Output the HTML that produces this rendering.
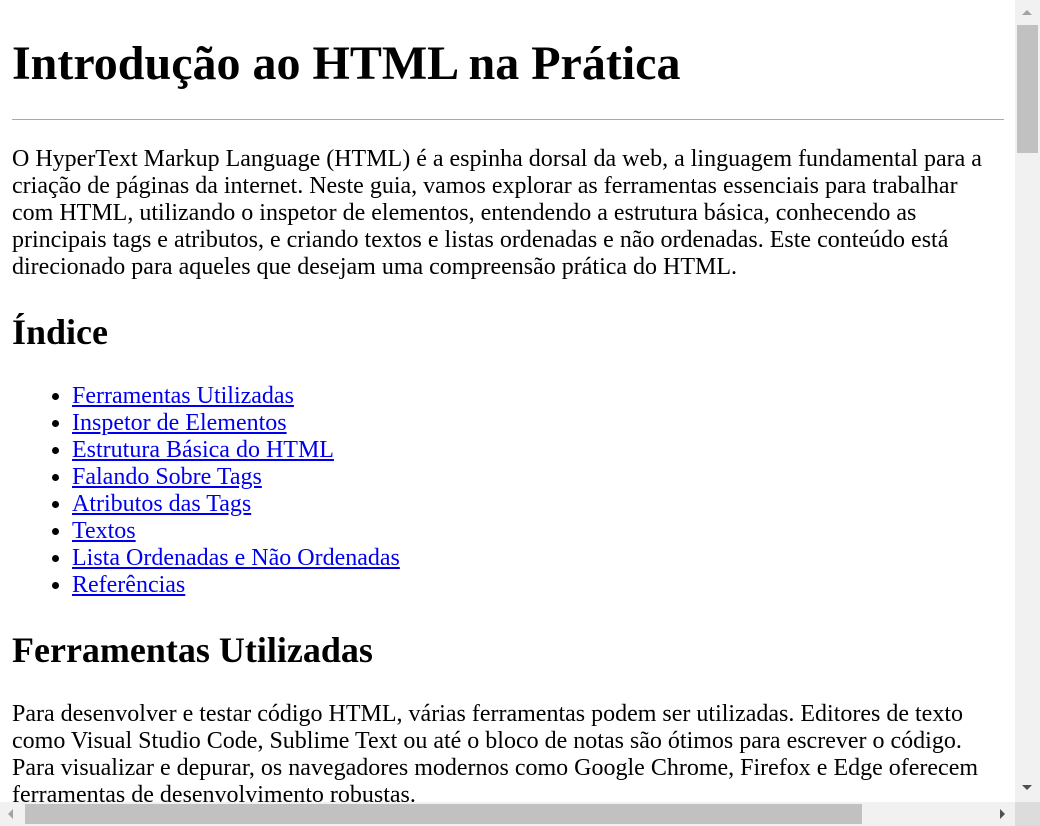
<!DOCTYPE html>
<html><head><meta charset="utf-8"><style>
html,body{margin:0;padding:0;overflow:hidden;background:#fff;width:1040px;height:826px}
#vp{position:absolute;left:0;top:0;width:1015px;height:802px;overflow:hidden}
#c{zoom:1.5;margin:8px;width:661px;font-family:"Liberation Serif",serif;font-size:16px;color:#000}
h1{font-size:2em;margin:0.67em 0;position:relative;top:2.67px}
h2{font-size:1.5em;margin:0.83em 0}
p{margin:1em 0}
hr+p{margin-top:17.4px}
ul{margin:1em 0;padding-left:40px}
a{color:#0000ee}
hr{border:0;border-top:1px solid #aaa;margin:8px 0 0}
.sb{position:absolute;background:#f1f1f1}
.th{position:absolute;background:#c1c1c1}
.ar{position:absolute;width:0;height:0}
</style></head><body>
<div id="vp"><div id="c">
<h1>Introdução ao HTML na Prática</h1>
<hr>
<p>O HyperText Markup Language (HTML) é a espinha dorsal da web, a linguagem fundamental para a criação de páginas da internet. Neste guia, vamos explorar as ferramentas essenciais para trabalhar com HTML, utilizando o inspetor de elementos, entendendo a estrutura básica, conhecendo as principais tags e atributos, e criando textos e listas ordenadas e não ordenadas. Este conteúdo está direcionado para aqueles que desejam uma compreensão prática do HTML.</p>
<h2>Índice</h2>
<ul>
<li><a href="#">Ferramentas Utilizadas</a></li>
<li><a href="#">Inspetor de Elementos</a></li>
<li><a href="#">Estrutura Básica do HTML</a></li>
<li><a href="#">Falando Sobre Tags</a></li>
<li><a href="#">Atributos das Tags</a></li>
<li><a href="#">Textos</a></li>
<li><a href="#">Lista Ordenadas e Não Ordenadas</a></li>
<li><a href="#">Referências</a></li>
</ul>
<h2>Ferramentas Utilizadas</h2>
<p>Para desenvolver e testar código HTML, várias ferramentas podem ser utilizadas. Editores de texto como Visual Studio Code, Sublime Text ou até o bloco de notas são ótimos para escrever o código. Para visualizar e depurar, os navegadores modernos como Google Chrome, Firefox e Edge oferecem ferramentas de desenvolvimento robustas.</p>
</div></div>
<div class="sb" style="left:1015px;top:0;width:25px;height:802px"></div>
<div class="th" style="left:1017px;top:25px;width:21px;height:128px"></div>
<div class="sb" style="left:0;top:802px;width:1015px;height:24px"></div>
<div class="th" style="left:25px;top:804px;width:837px;height:20px"></div>
<div class="sb" style="left:1015px;top:802px;width:25px;height:24px;background:#dcdcdc"></div>
<div class="ar" style="left:1022px;top:10px;border-left:5px solid transparent;border-right:5px solid transparent;border-bottom:5px solid #a3a3a3"></div>
<div class="ar" style="left:1022px;top:785px;border-left:5px solid transparent;border-right:5px solid transparent;border-top:5px solid #505050"></div>
<div class="ar" style="left:8px;top:809px;border-top:5px solid transparent;border-bottom:5px solid transparent;border-right:5px solid #a3a3a3"></div>
<div class="ar" style="left:1000px;top:809px;border-top:5px solid transparent;border-bottom:5px solid transparent;border-left:5px solid #505050"></div>
</body></html>
